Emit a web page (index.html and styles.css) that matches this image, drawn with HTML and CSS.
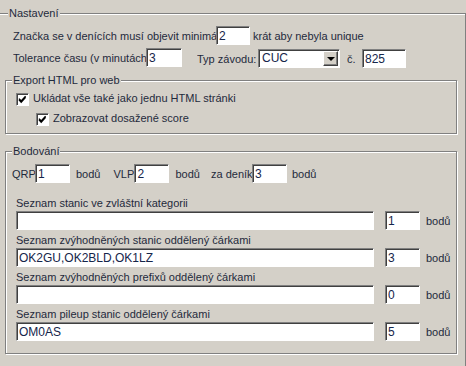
FILE: index.html
```html
<!DOCTYPE html>
<html lang="cs">
<head>
<meta charset="utf-8">
<title>Nastavení</title>
<link rel="stylesheet" href="styles.css">
</head>
<body>
<div class="page">
  <fieldset class="grp outer">
    <legend>Nastavení</legend>
    <div class="row row-first">
      <span class="lbl lbl-znacka">Značka se v denících musí objevit minimá</span>
      <input class="field f-count" type="text" value="2">
      <span class="txt after-count">krát aby nebyla unique</span>
    </div>
    <div class="row row-second">
      <span class="lbl lbl-tol">Tolerance času (v minutách</span>
      <input class="field f-tol" type="text" value="3">
      <span class="lbl lbl-typ">Typ závodu:</span>
      <div class="select">
        <span class="select-val">CUC</span>
        <span class="select-btn"><span class="arrow"></span></span>
      </div>
      <span class="lbl lbl-c">č.</span>
      <input class="field f-num" type="text" value="825">
    </div>

    <fieldset class="grp inner export">
      <legend>Export HTML pro web</legend>
      <div class="check check-1">
        <span class="cb"><svg width="13" height="13" viewBox="0 0 13 13"><path d="M3 5.6 L5.2 8 L9.6 3.2 M3 6.8 L5.2 9.2 L9.6 4.4" fill="none" stroke="#000" stroke-width="1.4"/></svg></span>
        <span class="txt">Ukládat vše také jako jednu HTML stránki</span>
      </div>
      <div class="check check-2">
        <span class="cb"><svg width="13" height="13" viewBox="0 0 13 13"><path d="M3 5.6 L5.2 8 L9.6 3.2 M3 6.8 L5.2 9.2 L9.6 4.4" fill="none" stroke="#000" stroke-width="1.4"/></svg></span>
        <span class="txt">Zobrazovat dosažené score</span>
      </div>
    </fieldset>

    <fieldset class="grp inner bod">
      <legend>Bodování</legend>
      <div class="row pts-row">
        <span class="lbl lbl-qrp">QRP</span>
        <input class="field f-pts" type="text" value="1">
        <span class="txt unit">bodů</span>
        <span class="lbl lbl-vlp">VLP</span>
        <input class="field f-pts" type="text" value="2">
        <span class="txt unit">bodů</span>
        <span class="lbl lbl-den">za deník</span>
        <input class="field f-pts" type="text" value="3">
        <span class="txt unit">bodů</span>
      </div>
      <div class="lists">
        <div class="item">
          <div class="item-lbl">Seznam stanic ve zvláštní kategorii</div>
          <div class="item-row">
            <input class="field f-wide" type="text" value="">
            <input class="field f-small" type="text" value="1">
            <span class="txt unit">bodů</span>
          </div>
        </div>
        <div class="item">
          <div class="item-lbl">Seznam zvýhodněných stanic oddělený čárkami</div>
          <div class="item-row">
            <input class="field f-wide" type="text" value="OK2GU,OK2BLD,OK1LZ">
            <input class="field f-small" type="text" value="3">
            <span class="txt unit">bodů</span>
          </div>
        </div>
        <div class="item">
          <div class="item-lbl">Seznam zvýhodněných prefixů oddělený čárkami</div>
          <div class="item-row">
            <input class="field f-wide" type="text" value="">
            <input class="field f-small" type="text" value="0">
            <span class="txt unit">bodů</span>
          </div>
        </div>
        <div class="item">
          <div class="item-lbl">Seznam pileup stanic oddělený čárkami</div>
          <div class="item-row">
            <input class="field f-wide" type="text" value="OM0AS">
            <input class="field f-small" type="text" value="5">
            <span class="txt unit">bodů</span>
          </div>
        </div>
      </div>
    </fieldset>
  </fieldset>
</div>
</body>
</html>
```

FILE: styles.css
```css
html, body {
  margin: 0;
  padding: 0;
  background: #d4d0c8;
}
body {
  font-family: "Liberation Sans", Arial, sans-serif;
  font-size: 11px;
  color: #1f2a3c;
  overflow: hidden;
}
.page {
  width: 466px;
  height: 366px;
  overflow: hidden;
}

/* etched group boxes */
.grp {
  box-sizing: border-box;
  margin: 0;
  padding: 0;
  min-width: 0;
  border: 1px solid #808080;
  box-shadow: inset 1px 1px 0 #fff, 1px 1px 0 #fff;
}
.grp > legend {
  padding: 0 1px;
  height: 14px;
  line-height: 14px;
  background: #d4d0c8;
  color: #1f2a3c;
}
.outer {
  margin: 6px 0 0 -4px;
  width: 470px;
  padding: 6px 0 24px 0;
}
.outer > legend {
  margin-left: 11px;
}
.inner {
  width: 452px;
  margin-left: 8px;
}
.inner > legend {
  margin-left: 6px;
}

/* rows */
.row {
  display: flex;
  align-items: center;
  height: 19px;
  white-space: nowrap;
}
.outer > .row {
  padding-left: 16px;
}
.row-second {
  margin-top: 3px;
}
.lbl {
  display: inline-block;
  overflow: hidden;
  white-space: nowrap;
  flex: none;
}
.txt {
  white-space: nowrap;
  flex: none;
}
.lbl-znacka { width: 203px; }
.after-count { margin-left: 3px; }
.lbl-tol { width: 133px; }
.lbl-typ { width: 61px; margin-left: 15px; margin-top: 2px; }
.lbl-c { width: 15px; margin-left: 7px; margin-top: 2px; }

/* text fields */
.field {
  box-sizing: border-box;
  height: 19px;
  margin: 0;
  padding: 0 0 0 2px;
  border: 1px solid;
  border-color: #808080 #ffffff #ffffff #808080;
  box-shadow: inset 1px 1px 0 #404040;
  background: #fff;
  font-family: "Liberation Sans", Arial, sans-serif;
  font-size: 12px;
  color: #15254a;
  outline: none;
  flex: none;
}
.f-count { width: 34px; }
.f-tol { width: 36px; }
.f-num { width: 44px; margin-top: 2px; }
.f-pts { width: 35px; }
.f-wide { width: 358px; }
.f-small { width: 35px; margin-left: 11px; }

/* combo box */
.select {
  box-sizing: border-box;
  width: 82px;
  height: 19px;
  margin-top: 2px;
  display: flex;
  border: 1px solid;
  border-color: #808080 #ffffff #ffffff #808080;
  box-shadow: inset 1px 1px 0 #404040;
  background: #fff;
  flex: none;
}
.select-val {
  flex: 1;
  padding-left: 3px;
  line-height: 17px;
  font-size: 12px;
  color: #15254a;
}
.select-btn {
  box-sizing: border-box;
  width: 15px;
  height: 15px;
  margin: 1px 1px 1px 0;
  border: 1px solid;
  border-color: #ffffff #404040 #404040 #ffffff;
  box-shadow: inset -1px -1px 0 #808080;
  background: #d4d0c8;
  display: flex;
  align-items: center;
  justify-content: center;
}
.arrow {
  width: 0;
  height: 0;
  border-left: 4px solid transparent;
  border-right: 4px solid transparent;
  border-top: 4px solid #000;
  margin-top: 1px;
}

/* export group */
.export {
  margin-top: 6px;
  padding: 3px 0 7px 0;
}
.check {
  display: flex;
  align-items: flex-start;
  height: 16px;
  line-height: 16px;
  white-space: nowrap;
}
.check-1 { padding-left: 10px; }
.check-2 { padding-left: 30px; margin-top: 4px; }
.cb {
  box-sizing: border-box;
  width: 13px;
  height: 13px;
  margin-top: 3px;
  margin-right: 4px;
  background: #fff;
  border: 1px solid;
  border-color: #808080 #ffffff #ffffff #808080;
  box-shadow: inset 1px 1px 0 #404040;
  flex: none;
}
.cb svg {
  display: block;
  margin: -1px 0 0 -1px;
}

/* bodovani group */
.bod {
  margin-top: 10px;
  padding: 6px 0 12px 0;
}
.pts-row {
  padding-left: 6px;
}
.lbl-qrp { width: 23px; }
.lbl-vlp { width: 21px; margin-left: 13px; }
.lbl-den { width: 41px; margin-left: 11px; }
.unit { margin-left: 6px; }
.pts-row .unit:last-child { margin-left: 5px; }

.lists {
  margin-top: 13px;
  padding-left: 10px;
}
.item + .item {
  margin-top: 3px;
}
.item-lbl {
  height: 14px;
  line-height: 14px;
  margin-bottom: 1px;
  white-space: nowrap;
}
.item-row {
  display: flex;
  align-items: center;
  height: 19px;
}
```
